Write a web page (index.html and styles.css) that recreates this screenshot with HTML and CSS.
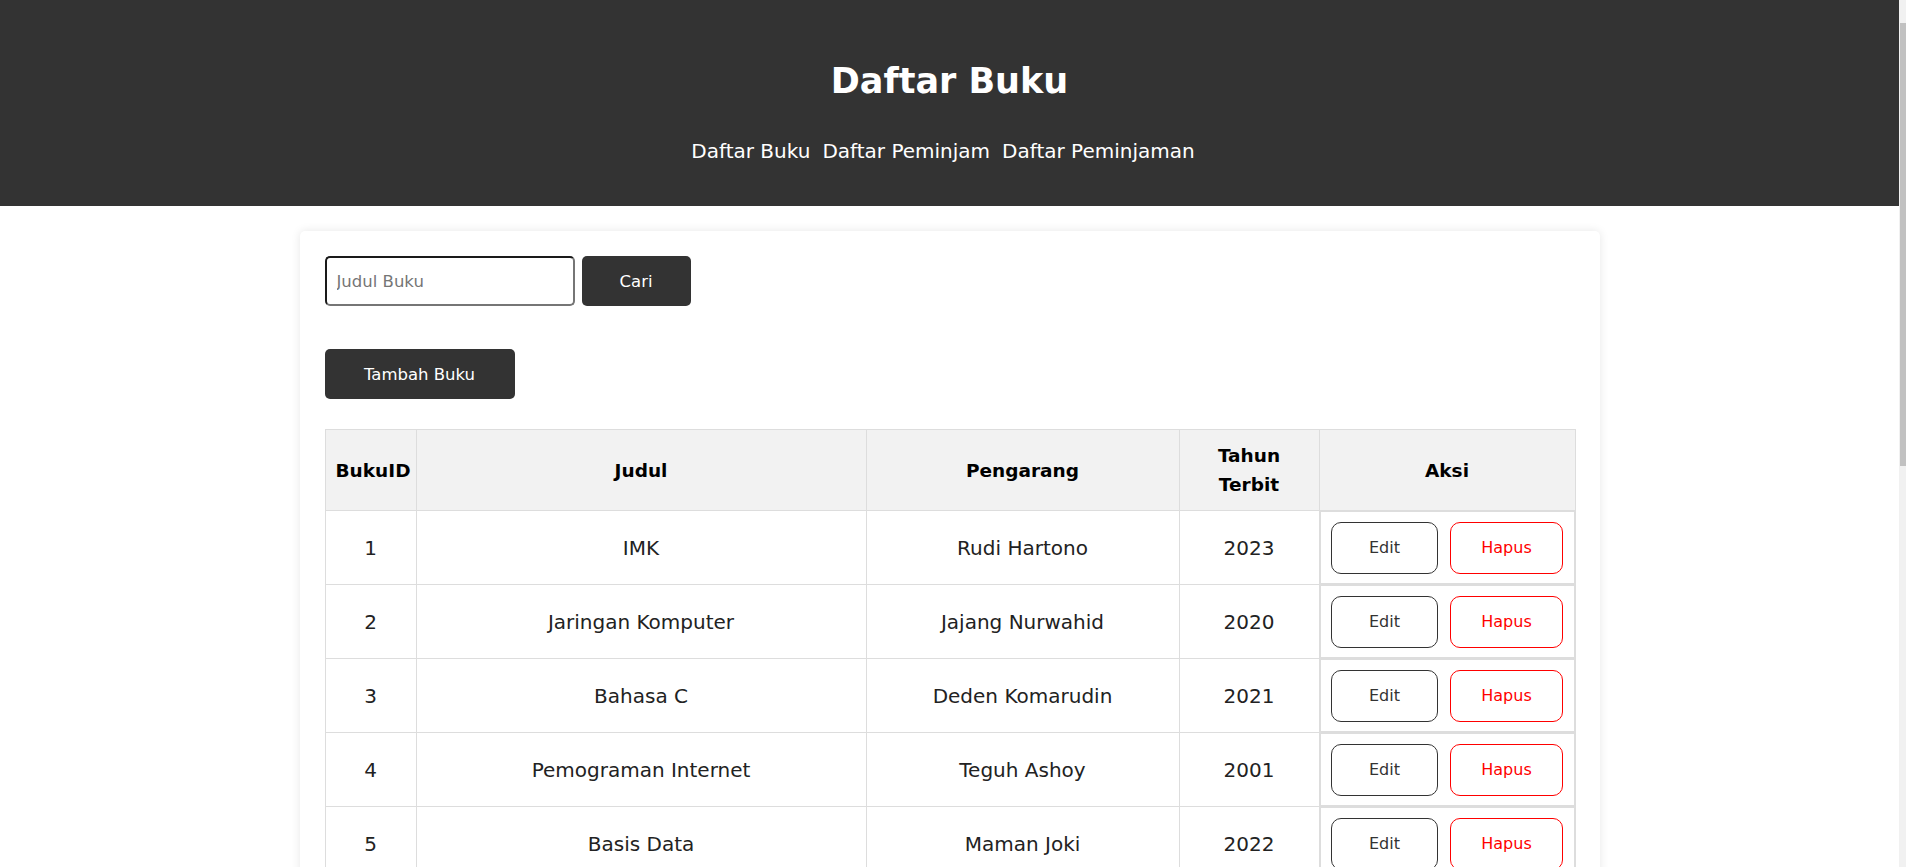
FILE: index.html
```html
<!DOCTYPE html>
<html lang="id">
<head>
<meta charset="utf-8">
<title>Daftar Buku</title>
<link rel="stylesheet" href="styles.css">
</head>
<body>
<header class="site-header">
  <h1 class="site-title">Daftar Buku</h1>
  <nav class="site-nav">
    <a href="#">Daftar Buku</a>
    <a href="#">Daftar Peminjam</a>
    <a href="#">Daftar Peminjaman</a>
  </nav>
</header>
<main class="card">
  <form class="search">
    <input class="search-input" type="text" placeholder="Judul Buku">
    <button class="btn-dark btn-search" type="button">Cari</button>
  </form>
  <div class="actions">
    <button class="btn-dark btn-add" type="button">Tambah Buku</button>
  </div>
  <table class="books">
    <colgroup>
      <col class="col-id">
      <col class="col-title">
      <col class="col-author">
      <col class="col-year">
      <col class="col-action">
    </colgroup>
    <thead>
      <tr>
        <th>BukuID</th>
        <th>Judul</th>
        <th>Pengarang</th>
        <th>Tahun Terbit</th>
        <th>Aksi</th>
      </tr>
    </thead>
    <tbody>
      <tr>
        <td>1</td><td>IMK</td><td>Rudi Hartono</td><td>2023</td>
        <td class="cell-actions"><div class="action-group"><button class="btn-edit" type="button">Edit</button><button class="btn-edit btn-delete" type="button">Hapus</button></div></td>
      </tr>
      <tr>
        <td>2</td><td>Jaringan Komputer</td><td>Jajang Nurwahid</td><td>2020</td>
        <td class="cell-actions"><div class="action-group"><button class="btn-edit" type="button">Edit</button><button class="btn-edit btn-delete" type="button">Hapus</button></div></td>
      </tr>
      <tr>
        <td>3</td><td>Bahasa C</td><td>Deden Komarudin</td><td>2021</td>
        <td class="cell-actions"><div class="action-group"><button class="btn-edit" type="button">Edit</button><button class="btn-edit btn-delete" type="button">Hapus</button></div></td>
      </tr>
      <tr>
        <td>4</td><td>Pemograman Internet</td><td>Teguh Ashoy</td><td>2001</td>
        <td class="cell-actions"><div class="action-group"><button class="btn-edit" type="button">Edit</button><button class="btn-edit btn-delete" type="button">Hapus</button></div></td>
      </tr>
      <tr>
        <td>5</td><td>Basis Data</td><td>Maman Joki</td><td>2022</td>
        <td class="cell-actions"><div class="action-group"><button class="btn-edit" type="button">Edit</button><button class="btn-edit btn-delete" type="button">Hapus</button></div></td>
      </tr>
    </tbody>
  </table>
</main>
</body>
</html>
```

FILE: styles.css
```css
html {
  background: #f1f1f1;
}

html::-webkit-scrollbar {
  width: 7px;
}
html::-webkit-scrollbar-track {
  background: #f1f1f1;
}
html::-webkit-scrollbar-thumb {
  background: #c1c1c1;
}

body {
  margin: 0 7px 0 0;
  background: #fff;
  font-family: "DejaVu Sans", "Liberation Sans", sans-serif;
  color: #222;
}

/* stand-in for the page scrollbar thumb seen in the capture */
body::after {
  content: "";
  position: fixed;
  top: 23px;
  right: 0;
  width: 6px;
  height: 443px;
  background: #c1c1c1;
}

.site-header {
  background: #333;
  padding: 54px 0 40px;
  text-align: center;
}

.site-title {
  margin: 0;
  font-size: 35px;
  line-height: 54px;
  font-weight: bold;
  color: #fff;
}

.site-nav {
  margin-top: 28px;
  display: flex;
  justify-content: center;
  gap: 12px;
  padding-right: 13px;
  font-size: 20px;
  line-height: 30px;
}

.site-nav a {
  color: #fff;
  text-decoration: none;
}

.card {
  max-width: 1300px;
  box-sizing: border-box;
  margin: 25px auto;
  padding: 25px;
  background: #fff;
  border-radius: 5px;
  box-shadow: 0 0 10px rgba(0, 0, 0, 0.1);
}

.search {
  display: flex;
  gap: 7px;
  margin: 0;
}

.search-input {
  width: 250px;
  height: 50px;
  box-sizing: border-box;
  border: 2px solid;
  border-color: #1a1a1a #767676 #767676 #1a1a1a;
  border-radius: 5px;
  padding: 0 10px;
  font-family: inherit;
  font-size: 16.5px;
  color: #222;
  outline: none;
}

.search-input::placeholder {
  color: #757575;
}

.btn-dark {
  height: 50px;
  background: #333;
  color: #fff;
  border: none;
  border-radius: 5px;
  font-family: inherit;
  font-size: 16.5px;
  padding: 0;
  cursor: pointer;
}

.btn-search {
  width: 109px;
}

.actions {
  margin-top: 43px;
}

.btn-add {
  width: 190px;
  display: block;
}

.books {
  margin-top: 30px;
  width: 100%;
  border-collapse: collapse;
  table-layout: fixed;
}

.col-id { width: 91px; }
.col-title { width: 450px; }
.col-author { width: 313px; }
.col-year { width: 140px; }
.col-action { width: 256px; }

.books th,
.books td {
  border: 1px solid #ddd;
  text-align: center;
  vertical-align: middle;
}

.books th {
  background: #f2f2f2;
  padding: 11px 10px;
  font-size: 18.5px;
  line-height: 29px;
  font-weight: bold;
  color: #000;
}

.books td {
  padding: 10.5px 10px;
  font-size: 20px;
  line-height: 30px;
  color: #222;
}

.books td.cell-actions {
  padding: 10.5px 0;
  box-shadow: inset 0 0 0 1px #ddd;
}

.action-group {
  display: flex;
  justify-content: center;
  gap: 12px;
}

.btn-edit {
  width: 107px;
  height: 52px;
  box-sizing: border-box;
  background: #fff;
  border: 1px solid #333;
  border-radius: 10px;
  color: #333;
  font-family: inherit;
  font-size: 16px;
  padding: 0;
  cursor: pointer;
}

.btn-delete {
  width: 113px;
  border-color: #ff0000;
  color: #ff0000;
}
```
